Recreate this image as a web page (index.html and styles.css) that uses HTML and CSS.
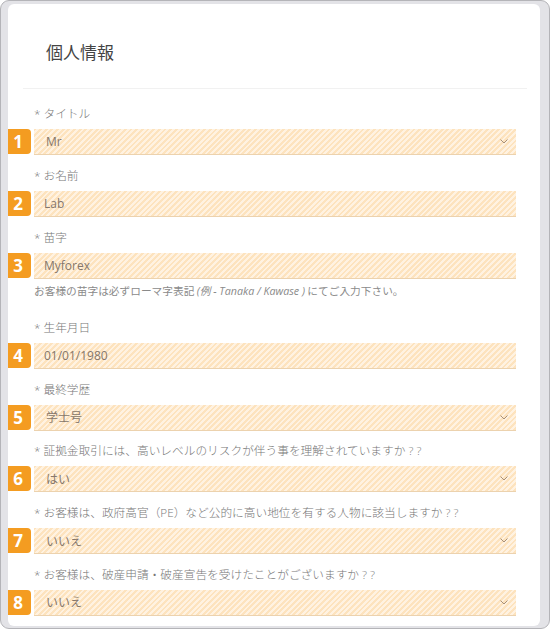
FILE: index.html
```html
<!DOCTYPE html>
<html lang="ja">
<head>
<meta charset="utf-8">
<title>個人情報</title>
<link rel="stylesheet" href="styles.css">
</head>
<body>
<div class="frame">
  <div class="card">
    <h2 class="title">個人情報</h2>
    <div class="divider"></div>
    <div class="fields">
      <div class="field">
        <div class="label">* タイトル</div>
        <div class="input select"><span class="badge">1</span><span class="val sel">Mr</span><svg class="chev" width="8" height="5" viewBox="0 0 8 5"><polyline points="0.5,0.5 4,4 7.5,0.5" fill="none" stroke="#a89078" stroke-width="1"/></svg></div>
      </div>
      <div class="field">
        <div class="label">* お名前</div>
        <div class="input"><span class="badge">2</span><span class="val">Lab</span></div>
      </div>
      <div class="field with-help">
        <div class="label">* 苗字</div>
        <div class="input"><span class="badge">3</span><span class="val">Myforex</span></div>
        <div class="help">お客様の苗字は必ずローマ字表記 <i>(例 - Tanaka / Kawase )</i> にてご入力下さい。</div>
      </div>
      <div class="field">
        <div class="label">* 生年月日</div>
        <div class="input"><span class="badge">4</span><span class="val">01/01/1980</span></div>
      </div>
      <div class="field">
        <div class="label">* 最終学歴</div>
        <div class="input select"><span class="badge">5</span><span class="val sel">学士号</span><svg class="chev" width="8" height="5" viewBox="0 0 8 5"><polyline points="0.5,0.5 4,4 7.5,0.5" fill="none" stroke="#a89078" stroke-width="1"/></svg></div>
      </div>
      <div class="field">
        <div class="label">* 証拠金取引には、高いレベルのリスクが伴う事を理解されていますか ? ?</div>
        <div class="input select"><span class="badge">6</span><span class="val sel">はい</span><svg class="chev" width="8" height="5" viewBox="0 0 8 5"><polyline points="0.5,0.5 4,4 7.5,0.5" fill="none" stroke="#a89078" stroke-width="1"/></svg></div>
      </div>
      <div class="field">
        <div class="label">* お客様は、政府高官（PE）など公的に高い地位を有する人物に該当しますか ? ?</div>
        <div class="input select"><span class="badge">7</span><span class="val sel">いいえ</span><svg class="chev" width="8" height="5" viewBox="0 0 8 5"><polyline points="0.5,0.5 4,4 7.5,0.5" fill="none" stroke="#a89078" stroke-width="1"/></svg></div>
      </div>
      <div class="field">
        <div class="label">* お客様は、破産申請・破産宣告を受けたことがございますか ? ?</div>
        <div class="input select"><span class="badge">8</span><span class="val sel">いいえ</span><svg class="chev" width="8" height="5" viewBox="0 0 8 5"><polyline points="0.5,0.5 4,4 7.5,0.5" fill="none" stroke="#a89078" stroke-width="1"/></svg></div>
      </div>
    </div>
  </div>
</div>
</body>
</html>
```
FILE: styles.css
```css
html, body {
  margin: 0;
  padding: 0;
  background: #ffffff;
}
body {
  font-family: "Open Sans", "Noto Sans CJK JP", sans-serif;
}
.frame {
  box-sizing: border-box;
  width: 550px;
  height: 629px;
  border: 1px solid #b4b4b8;
  border-radius: 9px;
  background: #e3e3e7;
  padding: 3px 9px 2px 7px;
  display: flex;
}
.card {
  flex: 1;
  background: #ffffff;
  border-radius: 6px;
  overflow: hidden;
}
.title {
  margin: 36px 0 0 38px;
  font-size: 17px;
  line-height: 24px;
  font-weight: normal;
  color: #444444;
  font-family: "Noto Sans CJK JP", sans-serif;
}
.divider {
  height: 1px;
  background: #f1f1f1;
  margin: 24px 13px 0 15px;
}
.fields {
  padding: 14px 24px 0 26px;
}
.field {
  margin-bottom: 9.75px;
}
.label {
  font-size: 11.7px;
  line-height: 20px;
  color: #777777;
  margin-bottom: 6px;
  font-family: "Open Sans", "Noto Sans CJK JP", sans-serif;
  font-weight: 300;
}
.input {
  position: relative;
  box-sizing: border-box;
  height: 26px;
  display: flex;
  align-items: center;
  padding: 0 10px;
  background: repeating-linear-gradient(135deg, #fde3be 0px, #fde3be 2px, #fff2e1 2px, #fff2e1 4px);
  border-bottom: 1px solid #ecd2ae;
  color: #85766a;
  font-size: 12px;
}
.val.sel {
  margin-left: 2px;
  flex: 1;
}
.chev {
  margin-right: -2px;
}
.badge {
  position: absolute;
  left: -29px;
  top: 0;
  width: 26px;
  height: 25px;
  border-radius: 4px;
  background: #f49c21;
  color: #ffffff;
  font-weight: bold;
  font-size: 17px;
  line-height: 25px;
  text-align: center;
  font-family: "Open Sans", sans-serif;
}
.help {
  margin-top: 4px;
  margin-bottom: 18.25px;
  font-size: 10.7px;
  line-height: 16px;
  color: #8a8a8a;
  font-family: "Noto Sans CJK JP", sans-serif;
}
.help i {
  font-family: "Open Sans", "Noto Sans CJK JP", sans-serif;
}
```
